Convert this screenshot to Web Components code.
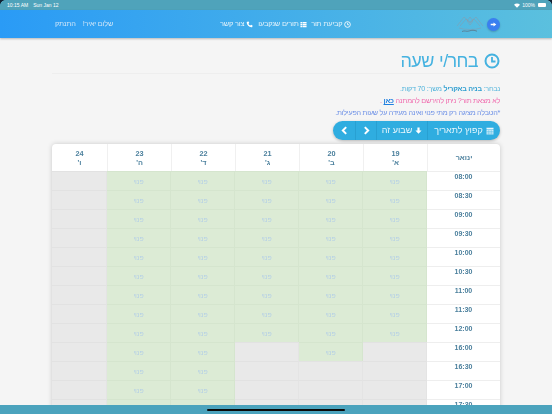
<!DOCTYPE html>
<html lang="he" dir="rtl">
<head>
<meta charset="utf-8">
<title>בחר/י שעה</title>
<style>
  html, body { margin: 0; height: 414px; overflow: hidden; background: #f5f5f5; font-family: "Liberation Sans", Arial, sans-serif; }
  #page { display: flex; flex-direction: column; height: 414px; position: relative; overflow: hidden; filter: blur(.3px); }
</style>
</head>
<body>
<div id="page">
  <status-bar></status-bar>
  <top-nav></top-nav>
  <booking-page>
    <hour-table></hour-table>
  </booking-page>
  <home-bar></home-bar>
</div>
<script>
(function () {
  const ICONS = {
    clock: (s, c) => `<svg viewBox="0 0 16 16" width="${s}" height="${s}"><circle cx="8" cy="8" r="6.5" fill="none" stroke="${c}" stroke-width="2"/><path d="M8 4v4.500H11.500" fill="none" stroke="${c}" stroke-width="1.8"/></svg>`,
    list: (s, c) => `<svg viewBox="0 0 16 16" width="${s}" height="${s}"><path d="M1 2h4v3H1zM6 2h9v3H6zM1 6.500h4v3H1zM6 6.500h9v3H6zM1 11h4v3H1zM6 11h9v3H6z" fill="${c}"/></svg>`,
    phone: (s, c) => `<svg viewBox="0 0 16 16" width="${s}" height="${s}"><path d="M3 1.500 6 1l1.500 3.500-2 1.500c.8 2 2.400 3.600 4.500 4.500l1.500-2L15 10l-.5 3c-.2 1-1 1.500-2 1.500C6.500 14 2 9.500 1.500 3.500c0-1 .5-1.800 1.500-2z" fill="${c}"/></svg>`,
    cal: (s, c) => `<svg viewBox="0 0 16 16" width="${s}" height="${s}"><path d="M1 1.500h14V5H1z" fill="${c}"/><path d="M1 6h14v9H1z" fill="${c}" opacity=".85"/><path d="M1 9h14M1 12h14M5.500 6v9M10.500 6v9" stroke="#2fade0" stroke-width=".7"/></svg>`,
    down: (s, c) => `<svg viewBox="0 0 16 16" width="${s}" height="${s}"><path d="M5.500 1h5v7H15l-7 7.500L1 8h4.500z" fill="${c}"/></svg>`,
    left: (s, c) => `<svg viewBox="0 0 16 16" width="${s}" height="${s}"><path d="M11 2 5 8l6 6" fill="none" stroke="${c}" stroke-width="3.500"/></svg>`,
    right: (s, c) => `<svg viewBox="0 0 16 16" width="${s}" height="${s}"><path d="M5 2l6 6-6 6" fill="none" stroke="${c}" stroke-width="3.500"/></svg>`
  };

  class StatusBar extends HTMLElement {
    connectedCallback() {
      this.attachShadow({ mode: 'open' }).innerHTML = `
<style>
  :host { display: flex; flex: none; height: 10px; background: #4fa3bb; color: #fff; direction: ltr; position: relative;
    align-items: center; justify-content: space-between; padding: 0 6px 0 7px; font: 5px/1 "Liberation Sans", sans-serif; }
  :host::before, :host::after { content: ""; position: absolute; top: 0; width: 5px; height: 5px; }
  :host::before { left: 0; background: radial-gradient(circle at 100% 100%, transparent 4.500px, #123 5px); }
  :host::after { right: 0; background: radial-gradient(circle at 0 100%, transparent 4.500px, #123 5px); }
  .l { display: flex; gap: 5px; }
  .r { display: flex; align-items: center; gap: 2px; }
  .bat { width: 8px; height: 3.500px; background: #fff; border-radius: 1px; margin-left: 1px; }
</style>
<div class="l"><span>10:15 AM</span><span>Sun Jan 12</span></div>
<div class="r">
  <svg viewBox="0 0 12 9" width="6" height="5"><path d="M6 9 0 3c3.400-3.500 8.600-3.500 12 0z" fill="#fff"/></svg>
  <span>100%</span><span class="bat"></span>
</div>`;
    }
  }

  class TopNav extends HTMLElement {
    connectedCallback() {
      this.attachShadow({ mode: 'open' }).innerHTML = `
<style>
  :host { display: flex; flex: none; height: 28px; direction: rtl; align-items: center; padding: 0 52px 0 55px;
    background: linear-gradient(270deg, #5bc0de 0%, #2a9bf6 100%);
    box-shadow: 0 1px 2px rgba(0,0,0,.25); position: relative; z-index: 1;
    color: #e4f3fb; font: 7.400px/1 "Liberation Sans", sans-serif; letter-spacing: -.2px; }
  .go { width: 13px; height: 13px; border-radius: 50%; background: #3a7ff0; display: flex; align-items: center; justify-content: center; box-shadow: 0 1px 2px rgba(0,0,0,.2); }
  .logo { width: 28px; height: 24px; margin-right: 3px; }
  .menu { display: flex; margin-right: 105px; }
  a { display: flex; align-items: center; gap: 1.500px; white-space: nowrap; }
  a:nth-child(1) { margin-left: 4px; }
  a:nth-child(2) { margin-left: 5.500px; }
  .user { display: flex; gap: 7px; margin-right: auto; font-size: 7.300px; color: #cfe6f8; letter-spacing: -.2px; }
</style>
<span class="go"><svg viewBox="0 0 10 10" width="7" height="7"><path d="M1 4h4V2l4 3-4 3V6H1z" fill="#fff"/></svg></span>
<svg class="logo" viewBox="0 0 28 24"><g fill="none" stroke="#8a99a8" stroke-width=".5"><path d="M1 14 8 5l6 5 6-5 7 9"/><path d="M4 14 10 7l4 4 4-4 6 7"/><path d="M3 16c6 2 16 2 22 0"/><path d="M14 5 11 9l3 4 3-4z"/></g><path d="M6 19.500c3-1.500 4 .5 7-.5s5-1 8 .2" fill="none" stroke="#5d6a78" stroke-width=".7"/></svg>
<div class="menu">
  <a>${ICONS.clock(7, '#fff')}<span>קביעת תור</span></a>
  <a>${ICONS.list(7, '#fff')}<span>תורים שנקבעו</span></a>
  <a>${ICONS.phone(7, '#fff')}<span>צור קשר</span></a>
</div>
<div class="user"><span>שלום יאיר!</span><span>התנתק</span></div>`;
    }
  }

  class BookingPage extends HTMLElement {
    connectedCallback() {
      this.attachShadow({ mode: 'open' }).innerHTML = `
<style>
  :host { display: block; flex: 1; min-height: 0; overflow: hidden; direction: rtl; padding: 0 52px; }
  h1 { margin: 10px 0 0; height: 25px; display: flex; align-items: center; gap: 6px; font: 400 18px/22px "Liberation Sans", sans-serif; letter-spacing: -.6px; word-spacing: 1px; color: #45b2e0; border-bottom: 1px solid #eee; }
  h1 svg { flex: none; }
  p { margin: 0; height: 12px; font: 7.200px/12px "Liberation Sans", sans-serif; letter-spacing: -.25px; }
  .info { margin-top: 9px; }
  .a { color: #54b5dc; } .a b { color: #2f9ed0; }
  .b { color: #f069ad; } .b a { color: #1f7fe0; font-weight: 700; text-decoration: underline; }
  .c { color: #6b8fe6; }
  .btns { display: flex; width: 167px; height: 19px; margin: 2px 0 4px; border-radius: 10px; background: #2fade0; color: #e9f7fd; box-shadow: 0 1px 3px rgba(0,0,0,.25);
    font: 9px/19px "Liberation Sans", sans-serif; overflow: hidden; }
  .btns span { display: flex; align-items: center; justify-content: center; gap: 3px; border-left: 1px solid #28a0d2; box-sizing: border-box; white-space: nowrap; }
  .btns span:last-child { border: 0; }
</style>
<h1>${ICONS.clock(16, '#45b2e0')}<span>בחר/י שעה</span></h1>
<div class="info">
  <p class="a">נבחר: <b>בניה באקריל</b> משך: 70 דקות.</p>
  <p class="b">לא מצאת תור? ניתן להירשם להמתנה <a>כאן</a> .</p>
  <p class="c">*הטבלה מציגה רק מתי פנוי ואינה מעידה על שעות הפעילות.</p>
</div>
<div class="btns">
  <span style="width:73px">${ICONS.cal(8, '#e9f7fd')}קפוץ לתאריך</span>
  <span style="width:51px">${ICONS.down(7, '#fff')}שבוע זה</span>
  <span style="width:21px">${ICONS.right(9, '#fff')}</span>
  <span style="width:22px">${ICONS.left(9, '#fff')}</span>
</div>
<slot></slot>`;
    }
  }

  class HourTable extends HTMLElement {
    connectedCallback() {
      const days = [['19', "א'"], ['20', "ב'"], ['21', "ג'"], ['22', "ד'"], ['23', "ה'"], ['24', "ו'"]];
      const times = ['08:00', '08:30', '09:00', '09:30', '10:00', '10:30', '11:00', '11:30', '12:00', '16:00', '16:30', '17:00', '17:30'];
      // how many rows stay free in each day column
      const freeRows = [9, 10, 9, 13, 13, 0];
      let cells = '<div class="h m">ינואר</div>';
      days.forEach(d => { cells += `<div class="h"><b>${d[0]}</b><b>${d[1]}</b></div>`; });
      times.forEach((t, r) => {
        cells += `<div class="t">${t}</div>`;
        freeRows.forEach(n => {
          cells += r < n ? '<div class="c free">פנוי</div>' : '<div class="c"></div>';
        });
      });
      this.attachShadow({ mode: 'open' }).innerHTML = `
<style>
  :host { display: grid; grid-template-columns: 73px repeat(5, 64px) 55px; grid-template-rows: 27px; grid-auto-rows: 19px; width: 448px; direction: rtl;
    background: #fff; border-radius: 4px 4px 0 0; box-shadow: 0 0 5px rgba(0,0,0,.18); font-family: "Liberation Sans", sans-serif; }
  .h { box-sizing: border-box; display: flex; flex-direction: column; align-items: center; justify-content: center; border-left: 1px solid #f0f0f0; color: #4a7f9c; font-size: 7.300px; line-height: 9px; }
  .h:nth-child(8) { border-left: 0; }
  .m { font-weight: 700; }
  .t { box-sizing: border-box; border-top: 1px solid #eee; color: #4a7f9c; font-size: 7px; font-weight: 700; line-height: 10px; text-align: center; }
  .c { box-sizing: border-box; background: #e9e9e9; border-top: 1px solid #e2e2e2; border-right: 1px solid #e4e4e4; font-size: 7px; letter-spacing: -.1px; line-height: 19px; text-align: center; color: #b4cfe6; }
  .free { background: #dcebd5; border-color: #d5e5ce; }
</style>
${cells}`;
    }
  }

  class HomeBar extends HTMLElement {
    connectedCallback() {
      this.attachShadow({ mode: 'open' }).innerHTML = `
<style>
  :host { display: flex; position: absolute; left: 0; right: 0; bottom: 0; height: 9px; background: #4ba3bd; align-items: center; justify-content: center; z-index: 2; }
  i { display: block; width: 138px; height: 2px; background: #0a0a0a; border-radius: 1px; }
</style>
<i></i>`;
    }
  }

  customElements.define('status-bar', StatusBar);
  customElements.define('top-nav', TopNav);
  customElements.define('booking-page', BookingPage);
  customElements.define('hour-table', HourTable);
  customElements.define('home-bar', HomeBar);
})();
</script>
</body>
</html>
